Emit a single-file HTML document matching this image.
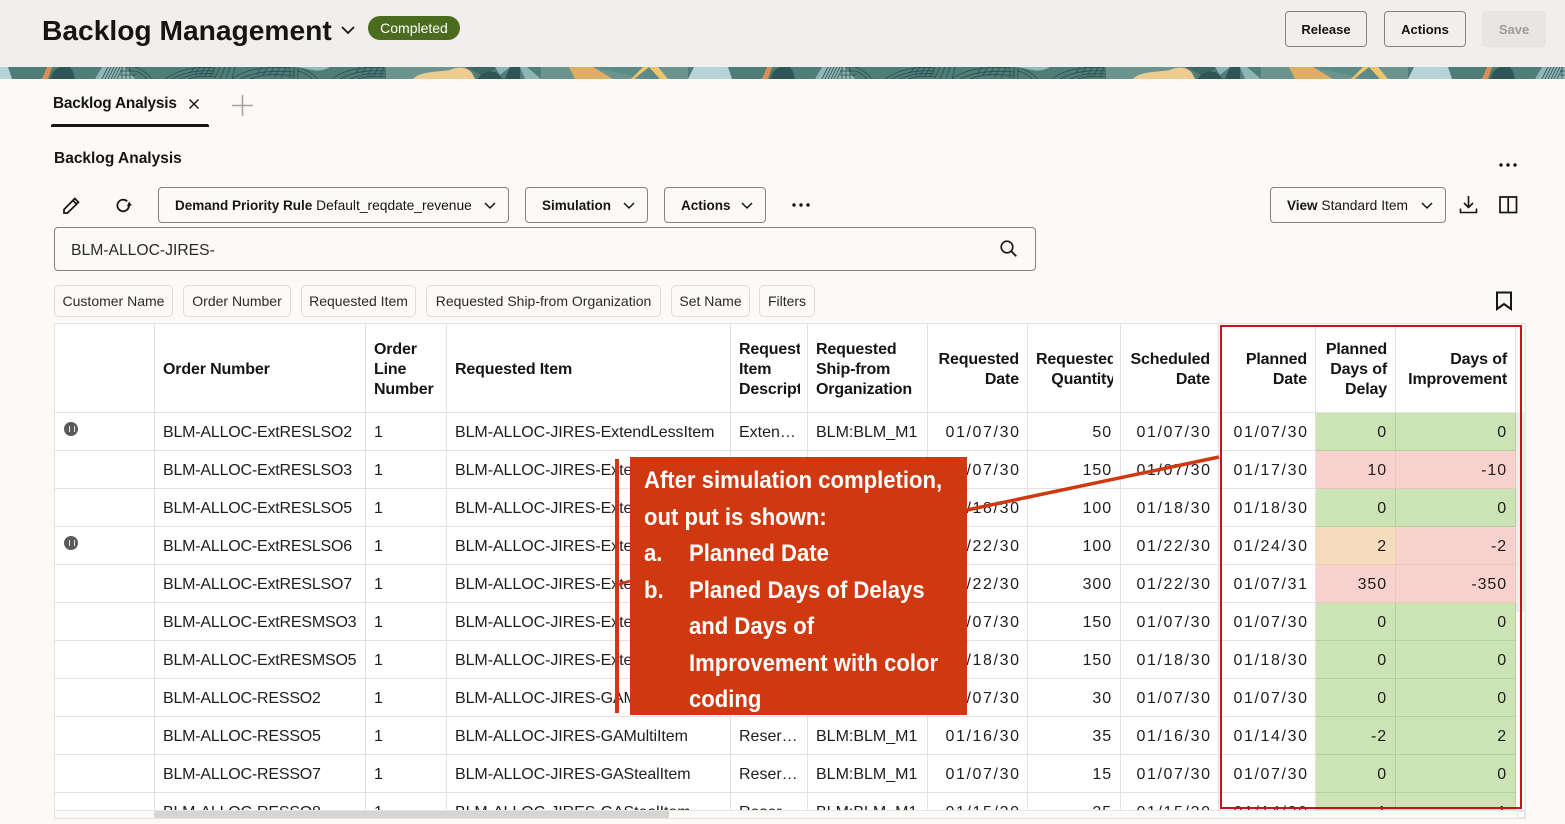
<!DOCTYPE html>
<html><head><meta charset="utf-8"><title>Backlog Management</title>
<style>
*{box-sizing:border-box}
html,body{margin:0;padding:0}
body{width:1565px;height:824px;overflow:hidden;position:relative;background:#fbfaf8;font-family:"Liberation Sans",sans-serif;color:#161513}
.a{position:absolute;white-space:nowrap}
.btn{position:absolute;border:1px solid #86827e;border-radius:4px;font-size:13px;font-weight:bold;display:flex;align-items:center;justify-content:center;white-space:nowrap}
.tb{height:36px;top:187px;justify-content:flex-start;padding-left:16px;font-size:13.5px}
.tb b{font-weight:bold}.tb span{font-weight:normal;font-size:13.8px}
.tb svg{position:absolute;right:11px;top:11px}
.chip{position:absolute;top:285px;height:32px;border:1px solid #dfdcd9;border-radius:5px;font-size:14px;display:flex;align-items:center;justify-content:center;white-space:nowrap;color:#2b2a28}
#wrap{position:absolute;left:54px;top:323px;width:1472px;height:496px;border:1px solid #e6e4e2;border-right-width:1px;background:#fbfaf8}
#clip{position:absolute;left:0;top:0;width:1461px;height:487px;overflow:hidden}
table{border-collapse:separate;border-spacing:0;table-layout:fixed;width:1461px;background:#fff}
td,th{border-right:1px solid #e4e2e0;border-bottom:1.5px solid #e4e2e0;padding:4px 8px 0;overflow:hidden;white-space:nowrap;font-size:16px;height:38px;font-weight:normal;text-align:left;color:#1e1d1b}
th{height:88.5px;font-weight:bold;white-space:normal;line-height:20px;color:#161513;letter-spacing:-.15px}
th div{overflow:hidden;white-space:nowrap}
.r{text-align:right}
.n{letter-spacing:1.6px;padding-right:6.4px}
.q{letter-spacing:.9px}
.on{letter-spacing:-.2px}
.it{letter-spacing:-.07px}
.g{background:#cce3b5;border-color:#b6cfa0}
.p{background:#f8d1ce;border-color:#ecc4c0}
.o{background:#f6dcbc;border-color:#eacfae}
.ic{display:inline-block;width:14px;height:14px;border-radius:50%;background:#5c5a58;position:relative;top:-2px;left:1px}
.ic:before{content:"";position:absolute;left:5px;top:4px;width:4px;height:6px;border-left:1.2px solid #e8e6e4;border-right:1.2px solid #e8e6e4}
.cl{position:absolute;left:0;color:#fff;font-weight:bold;font-size:24px;line-height:30px;white-space:nowrap;transform:scaleX(.92);transform-origin:0 50%}
</style></head><body>

<div class="a" style="left:0;top:0;width:1565px;height:67px;background:#f1efed"></div>
<div class="a" style="left:42px;top:12px;font-size:28.2px;font-weight:bold;line-height:36px;color:#161513">Backlog Management</div>
<svg class="a" style="left:340px;top:25px" width="16" height="10" viewBox="0 0 16 10"><path d="M2 2l6 6 6-6" fill="none" stroke="#161513" stroke-width="1.8"/></svg>
<div class="a" style="left:368px;top:16px;width:92px;height:24px;border-radius:12px;background:#4b6b1f;color:#fff;font-size:14px;line-height:24px;text-align:center">Completed</div>

<div class="btn" style="left:1285px;top:11px;width:82px;height:36px">Release</div>
<div class="btn" style="left:1384px;top:11px;width:82px;height:36px">Actions</div>
<div class="btn" style="left:1482px;top:11px;width:64px;height:36px;background:#e8e6e4;border-color:#e8e6e4;color:#a09c98">Save</div>

<svg class="a" style="left:0;top:67px" width="1565" height="12" viewBox="0 0 1565 12">
<defs>
<g id="tile">
<rect width="720" height="12" fill="#4f7d78"/>
<path d="M0 0H8L12 12H0Z" fill="#b7d3d5"/>
<path d="M47 0H52L48 12H42Z" fill="#e08a55"/>
<path d="M50 12C52 5 56 0 62 0H70C73 3 74 8 75 12Z" fill="#2f5655"/>
<path d="M102 0H125L135 12H95Z" fill="#8fb5b3"/>
<g fill="none" stroke="#2c4f4e" stroke-width=".8">
<path d="M102 12L108 0M105 12L111 0M108 12L114 0M111 12L117 0M114 12L120 0M117 12L123 0M122 12V0M126 12V0M130 12V0M120 4H134M120 8H136"/>
<path d="M135 0Q146 4 152 12M135 4Q142 6 147 12"/>
<path d="M165 12Q185-2 215 1M172 12Q190 2 215 4M180 12Q195 5 215 7M188 12Q200 8 215 10"/>
<path d="M195 0L190 6M200 0L195 7M205 0L200 8M210 0L205 9M215 0L210 10M220 0L215 11M225 0L220 12M230 0L226 12M235 0L232 12"/>
<path d="M232 12Q250-2 290 1M240 12Q260 2 295 5M250 12Q265 5 295 9"/>
<path d="M262 0L257 7M268 0L263 8M274 0L269 9M280 0L275 10M286 0L281 11M290 0V12M294 0V12M298 0V12"/>
<path d="M298 0Q310 4 318 12M298 4Q306 6 312 12"/>
<path d="M332 12Q350-2 385 1M340 12Q358 2 386 4M350 12Q365 5 386 7M358 12Q370 8 386 10"/>
<path d="M360 0L356 6M366 0L362 7M372 0L368 8M378 0L374 9M384 0L380 10"/>
</g>
<path d="M296 0H330Q322 5 312 3Z" fill="#95bab8"/>
<rect x="386" y="0" width="80" height="12" fill="#6b948e"/>
<path d="M413 12C420 4 440 5 450 3 C458-1 468 0 472 6L475 12Z" fill="#eecb90"/>
<path d="M466 0H500L482 8Z" fill="#3f6764"/>
<path d="M478 12C480 6 490 2 497 6L503 12Z" fill="#2f5655"/>
<path d="M495 0H510L500 8Z" fill="#8fb5b3"/>
<path d="M505 12L510 0H520V12Z" fill="#2f5655"/>
<path d="M520 0H527L541 12H525Z" fill="#8fb5b3"/>
<rect x="541" y="0" width="147" height="12" fill="#6b948e"/>
<path d="M569 0H593L613 12H575Z" fill="#e0ae62"/>
<path d="M593 0L645 12H665L650 0Z" fill="#5d8a85"/>
<path d="M643 0H649L634 12H631Z" fill="#eec66a"/>
<path d="M649 0H658L668 12H660Z" fill="#eec66a"/>
<path d="M688 12L694 0H728L732 12Z" fill="#b9d4d6"/>
</g>
</defs>
<use href="#tile" x="0"/><use href="#tile" x="720"/><use href="#tile" x="1440"/>
</svg>

<div class="a" style="left:53px;top:94px;font-size:15.4px;font-weight:bold;line-height:20px;letter-spacing:-.2px">Backlog Analysis</div>
<svg class="a" style="left:188px;top:98px" width="12" height="12" viewBox="0 0 12 12"><path d="M1.500 1.500l9 9M10.500 1.500l-9 9" stroke="#161513" stroke-width="1.400"/></svg>
<div class="a" style="left:51px;top:124px;width:158px;height:3px;background:#161513;border-radius:2px 2px 0 0"></div>
<svg class="a" style="left:232px;top:95px" width="21" height="21" viewBox="0 0 21 21"><path d="M10.500 0v21M0 10.500h21" stroke="#a5a3a1" stroke-width="1.600"/></svg>

<div class="a" style="left:54px;top:149px;font-size:15.500px;font-weight:bold;line-height:20px">Backlog Analysis</div>
<svg class="a" style="left:1498px;top:162px" width="20" height="6"><circle cx="3" cy="3" r="1.700" fill="#161513"/><circle cx="10" cy="3" r="1.700" fill="#161513"/><circle cx="17" cy="3" r="1.700" fill="#161513"/></svg>

<svg class="a" style="left:62px;top:196px" width="19" height="19" viewBox="0 0 19 19"><path d="M2 13.500L12.800 2.500l3.700 3.700L5.500 17H2ZM11 4.500l3.500 3.500" fill="none" stroke="#161513" stroke-width="1.700"/></svg>
<svg class="a" style="left:114px;top:196px" width="19" height="19" viewBox="0 0 19 19"><path d="M15 9.500a5.800 5.800 0 1 1-1.800-4.200" fill="none" stroke="#161513" stroke-width="1.800"/><path d="M15.500 5.500l2 4.500h-5z" fill="#161513" transform="rotate(-10 15 8)"/></svg>

<div class="btn tb" style="left:158px;width:351px"><b>Demand Priority Rule</b><span>&nbsp;Default_reqdate_revenue</span><svg width="14" height="14" viewBox="0 0 14 14"><path d="M2 4l5 5 5-5" fill="none" stroke="#161513" stroke-width="1.500"/></svg></div>
<div class="btn tb" style="left:525px;width:123px"><b>Simulation</b><svg width="14" height="14" viewBox="0 0 14 14"><path d="M2 4l5 5 5-5" fill="none" stroke="#161513" stroke-width="1.500"/></svg></div>
<div class="btn tb" style="left:664px;width:102px"><b>Actions</b><svg width="14" height="14" viewBox="0 0 14 14"><path d="M2 4l5 5 5-5" fill="none" stroke="#161513" stroke-width="1.500"/></svg></div>
<svg class="a" style="left:791px;top:202px" width="20" height="6"><circle cx="3" cy="3" r="1.700" fill="#161513"/><circle cx="10" cy="3" r="1.700" fill="#161513"/><circle cx="17" cy="3" r="1.700" fill="#161513"/></svg>
<div class="btn tb" style="left:1270px;width:176px"><b>View</b><span>&nbsp;Standard Item</span><svg width="14" height="14" viewBox="0 0 14 14"><path d="M2 4l5 5 5-5" fill="none" stroke="#161513" stroke-width="1.500"/></svg></div>
<svg class="a" style="left:1459px;top:195px" width="19" height="19" viewBox="0 0 19 19"><path d="M9.500 1v11M5 8l4.500 4.500L14 8M1.500 13.500v4h16v-4" fill="none" stroke="#161513" stroke-width="1.600"/></svg>
<svg class="a" style="left:1499px;top:196px" width="19" height="18" viewBox="0 0 19 18"><path d="M1 1h16.500v15.500H1ZM9.200 1v15.500" fill="none" stroke="#161513" stroke-width="1.700"/></svg>

<div class="a" style="left:54px;top:227px;width:982px;height:44px;border:1px solid #86827e;border-radius:4px;font-size:15.700px;line-height:45px;padding-left:16px;color:#2b2a28">BLM-ALLOC-JIRES-</div>
<svg class="a" style="left:999px;top:239px" width="19" height="19" viewBox="0 0 19 19"><circle cx="8" cy="8" r="5.800" fill="none" stroke="#161513" stroke-width="1.600"/><path d="M12.300 12.300l5 5" stroke="#161513" stroke-width="1.800"/></svg>

<div class="chip" style="left:54px;width:119px">Customer Name</div>
<div class="chip" style="left:183px;width:108px">Order Number</div>
<div class="chip" style="left:301px;width:115px">Requested Item</div>
<div class="chip" style="left:426px;width:235px">Requested Ship-from Organization</div>
<div class="chip" style="left:671px;width:79px">Set Name</div>
<div class="chip" style="left:759px;width:56px">Filters</div>
<svg class="a" style="left:1495px;top:291px" width="18" height="20" viewBox="0 0 18 20"><path d="M2 1.500h14v16.500l-7-5-7 5Z" fill="none" stroke="#161513" stroke-width="2"/></svg>

<div id="wrap">
<div id="clip">
<table>
<colgroup><col style="width:100px"><col style="width:211px"><col style="width:81px"><col style="width:284px"><col style="width:77px"><col style="width:120px"><col style="width:100px"><col style="width:93px"><col style="width:98px"><col style="width:97px"><col style="width:80px"><col style="width:120px"></colgroup>
<tr>
<th></th><th>Order Number</th><th>Order<br>Line<br>Number</th><th>Requested Item</th>
<th style="padding-right:7px"><div>Requested<br>Item<br>Description</div></th><th>Requested<br>Ship-from<br>Organization</th>
<th class="r">Requested<br>Date</th><th class="r" style="padding-right:7px"><div>Requested<br><span style="float:right;margin-right:-2px">Quantity</span></div></th><th class="r">Scheduled<br>Date</th><th class="r">Planned<br>Date</th><th class="r">Planned<br>Days of<br>Delay</th><th class="r">Days of<br>Improvement</th>
</tr>
<tr><td><span class="ic"></span></td><td class="on">BLM-ALLOC-ExtRESLSO2</td><td>1</td><td class="it">BLM-ALLOC-JIRES-ExtendLessItem</td><td>Exten…</td><td>BLM:BLM_M1</td><td class="r n">01/07/30</td><td class="r q">50</td><td class="r n">01/07/30</td><td class="r n">01/07/30</td><td class="r q g">0</td><td class="r q g">0</td></tr>
<tr><td></td><td class="on">BLM-ALLOC-ExtRESLSO3</td><td>1</td><td class="it">BLM-ALLOC-JIRES-ExtendLessItem</td><td>Exten…</td><td>BLM:BLM_M1</td><td class="r n">01/07/30</td><td class="r q">150</td><td class="r n">01/07/30</td><td class="r n">01/17/30</td><td class="r q p">10</td><td class="r q p">-10</td></tr>
<tr><td></td><td class="on">BLM-ALLOC-ExtRESLSO5</td><td>1</td><td class="it">BLM-ALLOC-JIRES-ExtendLessItem</td><td>Exten…</td><td>BLM:BLM_M1</td><td class="r n">01/18/30</td><td class="r q">100</td><td class="r n">01/18/30</td><td class="r n">01/18/30</td><td class="r q g">0</td><td class="r q g">0</td></tr>
<tr><td><span class="ic"></span></td><td class="on">BLM-ALLOC-ExtRESLSO6</td><td>1</td><td class="it">BLM-ALLOC-JIRES-ExtendLessItem</td><td>Exten…</td><td>BLM:BLM_M1</td><td class="r n">01/22/30</td><td class="r q">100</td><td class="r n">01/22/30</td><td class="r n">01/24/30</td><td class="r q o">2</td><td class="r q p">-2</td></tr>
<tr><td></td><td class="on">BLM-ALLOC-ExtRESLSO7</td><td>1</td><td class="it">BLM-ALLOC-JIRES-ExtendLessItem</td><td>Exten…</td><td>BLM:BLM_M1</td><td class="r n">01/22/30</td><td class="r q">300</td><td class="r n">01/22/30</td><td class="r n">01/07/31</td><td class="r q p">350</td><td class="r q p">-350</td></tr>
<tr><td></td><td class="on">BLM-ALLOC-ExtRESMSO3</td><td>1</td><td class="it">BLM-ALLOC-JIRES-ExtendMoreItem</td><td>Exten…</td><td>BLM:BLM_M1</td><td class="r n">01/07/30</td><td class="r q">150</td><td class="r n">01/07/30</td><td class="r n">01/07/30</td><td class="r q g">0</td><td class="r q g">0</td></tr>
<tr><td></td><td class="on">BLM-ALLOC-ExtRESMSO5</td><td>1</td><td class="it">BLM-ALLOC-JIRES-ExtendMoreItem</td><td>Exten…</td><td>BLM:BLM_M1</td><td class="r n">01/18/30</td><td class="r q">150</td><td class="r n">01/18/30</td><td class="r n">01/18/30</td><td class="r q g">0</td><td class="r q g">0</td></tr>
<tr><td></td><td class="on">BLM-ALLOC-RESSO2</td><td>1</td><td class="it">BLM-ALLOC-JIRES-GAMultiItem</td><td>Reser…</td><td>BLM:BLM_M1</td><td class="r n">01/07/30</td><td class="r q">30</td><td class="r n">01/07/30</td><td class="r n">01/07/30</td><td class="r q g">0</td><td class="r q g">0</td></tr>
<tr><td></td><td class="on">BLM-ALLOC-RESSO5</td><td>1</td><td class="it">BLM-ALLOC-JIRES-GAMultiItem</td><td>Reser…</td><td>BLM:BLM_M1</td><td class="r n">01/16/30</td><td class="r q">35</td><td class="r n">01/16/30</td><td class="r n">01/14/30</td><td class="r q g">-2</td><td class="r q g">2</td></tr>
<tr><td></td><td class="on">BLM-ALLOC-RESSO7</td><td>1</td><td class="it">BLM-ALLOC-JIRES-GAStealItem</td><td>Reser…</td><td>BLM:BLM_M1</td><td class="r n">01/07/30</td><td class="r q">15</td><td class="r n">01/07/30</td><td class="r n">01/07/30</td><td class="r q g">0</td><td class="r q g">0</td></tr>
<tr><td></td><td class="on">BLM-ALLOC-RESSO8</td><td>1</td><td class="it">BLM-ALLOC-JIRES-GAStealItem</td><td>Reser…</td><td>BLM:BLM_M1</td><td class="r n">01/15/30</td><td class="r q">25</td><td class="r n">01/15/30</td><td class="r n">01/14/30</td><td class="r q g">-1</td><td class="r q g">1</td></tr>
</table>
</div>
<div class="a" style="left:0;top:486px;width:1470px;height:1px;background:#e6e4e2"></div>
<div class="a" style="left:99px;top:487px;width:515px;height:7px;background:#d6d5d3;border-radius:2px"></div>
<div class="a" style="left:1461px;top:88px;width:9px;height:200px;background:#eeecea"></div>
<div class="a" style="left:1462px;top:487px;width:8px;height:7px;background:#fff;border:1px solid #e6e4e2"></div>
</div>

<!-- annotations -->
<svg class="a" style="left:0;top:0;pointer-events:none" width="1565" height="824">
<path d="M967 510L1219 457" stroke="#d0380f" stroke-width="3.500"/>
<path d="M615 585.500L630 581" stroke="#d0380f" stroke-width="3"/>
<rect x="615" y="459" width="4" height="254" fill="#d0380f"/>
<rect x="630" y="457" width="337" height="258" fill="#d0380f"/>
<rect x="1221" y="326" width="300" height="482" fill="none" stroke="#cc0f1b" stroke-width="2"/>
</svg>
<div class="a" style="left:644px;top:457px;width:320px;height:258px">
<div class="cl" style="top:9px">After simulation completion,</div>
<div class="cl" style="top:46px">out put is shown:</div>
<div class="cl" style="top:82px">a.</div><div class="cl" style="top:82px;left:45px">Planned Date</div>
<div class="cl" style="top:119px">b.</div><div class="cl" style="top:119px;left:45px">Planed Days of Delays</div>
<div class="cl" style="top:155px;left:45px">and Days of</div>
<div class="cl" style="top:192px;left:45px">Improvement with color</div>
<div class="cl" style="top:228px;left:45px">coding</div>
</div>
</body></html>
